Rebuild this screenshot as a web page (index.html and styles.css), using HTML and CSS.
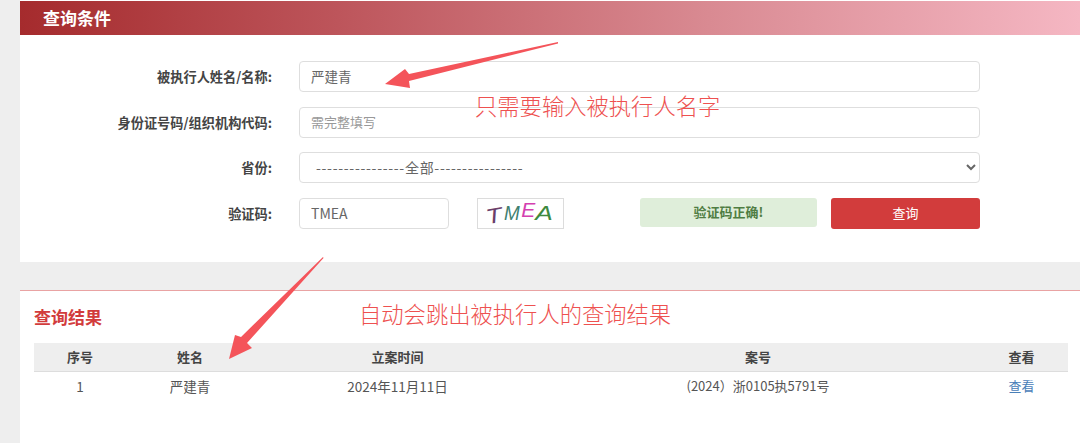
FILE: index.html
```html
<!DOCTYPE html>
<html lang="zh-CN">
<head>
<meta charset="utf-8">
<title>查询条件</title>
<link rel="stylesheet" href="styles.css">
</head>
<body>
<main class="page">
  <h2 class="panel-title">查询条件</h2>
  <form class="form">
    <div class="row">
      <label class="label">被执行人姓名/名称:</label>
      <input class="field field-value" type="text" value="严建青">
    </div>
    <div class="row row-tight">
      <label class="label">身份证号码/组织机构代码:</label>
      <input class="field" type="text" placeholder="需完整填写">
    </div>
    <div class="row">
      <label class="label">省份:</label>
      <select class="field field-select"><option>----------------全部----------------</option></select>
    </div>
    <div class="row row-last">
      <label class="label">验证码:</label>
      <input class="field field-code" type="text" value="TMEA">
      <div class="captcha">
        <span class="cap cap-t">T</span><span class="cap cap-m">M</span><span class="cap cap-e">E</span><span class="cap cap-a">A</span>
      </div>
      <div class="notice">验证码正确!</div>
      <button class="submit" type="button">查询</button>
    </div>
  </form>
  <div class="band"></div>
  <section class="results">
    <h3 class="results-title">查询结果</h3>
    <div class="table">
      <div class="cell head">序号</div>
      <div class="cell head">姓名</div>
      <div class="cell head">立案时间</div>
      <div class="cell head">案号</div>
      <div class="cell head">查看</div>
      <div class="cell">1</div>
      <div class="cell">严建青</div>
      <div class="cell">2024年11月11日</div>
      <div class="cell cell-case">(2024）浙0105执5791号</div>
      <div class="cell cell-link"><a class="link" href="#">查看</a></div>
    </div>
  </section>
</main>
<svg class="arrows" width="1080" height="443" viewBox="0 0 1080 443" aria-hidden="true">
  <polygon points="558,42 558,43.5 409,81 410,88 385,84 405,69 409,74"/>
  <polygon points="323,257 323.5,258 247,343 252,348 229,359 235,335 241,337"/>
</svg>
<div class="note note-one">只需要输入被执行人名字</div>
<div class="note note-two">自动会跳出被执行人的查询结果</div>
</body>
</html>
```

FILE: styles.css
```css
* { box-sizing: border-box; }
html, body { margin: 0; height: 100%; }
body {
  background: #eeeeee;
  font-family: "Noto Sans CJK SC", "Noto Sans", sans-serif;
  font-size: 13px;
  color: #444;
  overflow: hidden;
  position: relative;
}
.page {
  margin-left: 20px;
  min-height: 443px;
  background: #fff;
  padding-top: 1px;
}
.panel-title {
  margin: 0;
  height: 34px;
  padding-left: 23px;
  line-height: 34px;
  font-size: 17px;
  font-weight: 700;
  color: #fff;
  background: linear-gradient(90deg, #a52b2d 0%, #bd555b 30%, #d98a92 65%, #f5b7c3 100%);
}
.form { padding: 26px 0 33px; }
.row {
  display: flex;
  align-items: center;
  height: 31px;
  margin-bottom: 15px;
}
.row-tight { margin-bottom: 14px; }
.row-last { margin-bottom: 0; }
.label {
  width: 252px;
  margin-right: 27px;
  text-align: right;
  font-size: 13.2px;
  font-weight: 700;
  color: #444;
}
.field {
  width: 681px;
  height: 31px;
  padding: 0 11px 2px;
  border: 1px solid #dedede;
  border-radius: 4px;
  background: #fff;
  font: inherit;
  color: #666;
  outline: none;
}
.field::placeholder { color: #999; }
.field-value { font-size: 13.5px; }
.field-select { padding: 0 12px 2px; font-size: 14px; letter-spacing: 0.7px; }
.field-code { width: 150px; font-size: 14px; }
.captcha {
  display: flex;
  align-items: center;
  justify-content: center;
  width: 87px;
  height: 31px;
  margin-left: 28px;
  padding-right: 3px;
  border: 1px solid #dcdcdc;
  background: #fff;
  font-family: "Liberation Sans", sans-serif;
  font-style: italic;
  font-size: 21px;
  line-height: 1;
}
.cap { display: block; }
.cap-t { color: #6b3f6b; margin-right: 3px; transform: rotate(-10deg) translateY(2px) scaleX(1.25); }
.cap-m { color: #3f8070; margin-right: 1px; transform: translateY(-1px) scaleX(.9); }
.cap-e { color: #d43fb0; margin-right: 2px; transform: translateY(-4px); }
.cap-a { color: #3e8a3e; transform: translateY(-1px) scaleX(1.25); }
.notice {
  width: 177px;
  height: 29px;
  margin: 0 14px 2px 76px;
  border-radius: 3px;
  background: #dfeeda;
  color: #4f7d43;
  font-weight: 700;
  line-height: 28px;
  text-align: center;
}
.submit {
  width: 149px;
  height: 31px;
  padding: 0 0 2px;
  border: 0;
  border-radius: 3px;
  background: #d23c3c;
  color: #fff;
  font: inherit;
}
.band {
  height: 29px;
  background: #eeeeee;
  border-bottom: 1px solid #e9a3a3;
}
.results { padding: 0 12px 0 14px; }
.results-title {
  margin: 0;
  height: 52px;
  line-height: 52px;
  font-size: 17px;
  font-weight: 700;
  color: #d23c3c;
}
.table {
  display: grid;
  grid-template-columns: 92px 128px 287px 434px 93px;
  grid-template-rows: 29px 30px;
}
.cell {
  display: flex;
  align-items: center;
  justify-content: center;
  padding-bottom: 3px;
  font-size: 13.5px;
  color: #555;
}
.cell-case, .cell-link { font-size: 13px; }
.head {
  padding-bottom: 2px;
  font-size: 13px;
  background: #eeeeee;
  border-bottom: 1px solid #dddddd;
  font-weight: 700;
  color: #444;
}
.link { color: #4a80b8; text-decoration: none; }
.arrows {
  position: absolute;
  left: 0;
  top: 0;
  pointer-events: none;
}
.arrows polygon { fill: #f4545a; }
.note {
  position: absolute;
  font-size: 22.3px;
  line-height: 30px;
  font-weight: 300;
  color: #ee5150;
  white-space: nowrap;
}
.note-one { left: 475px; top: 90px; }
.note-two { left: 359px; top: 298px; }
```
